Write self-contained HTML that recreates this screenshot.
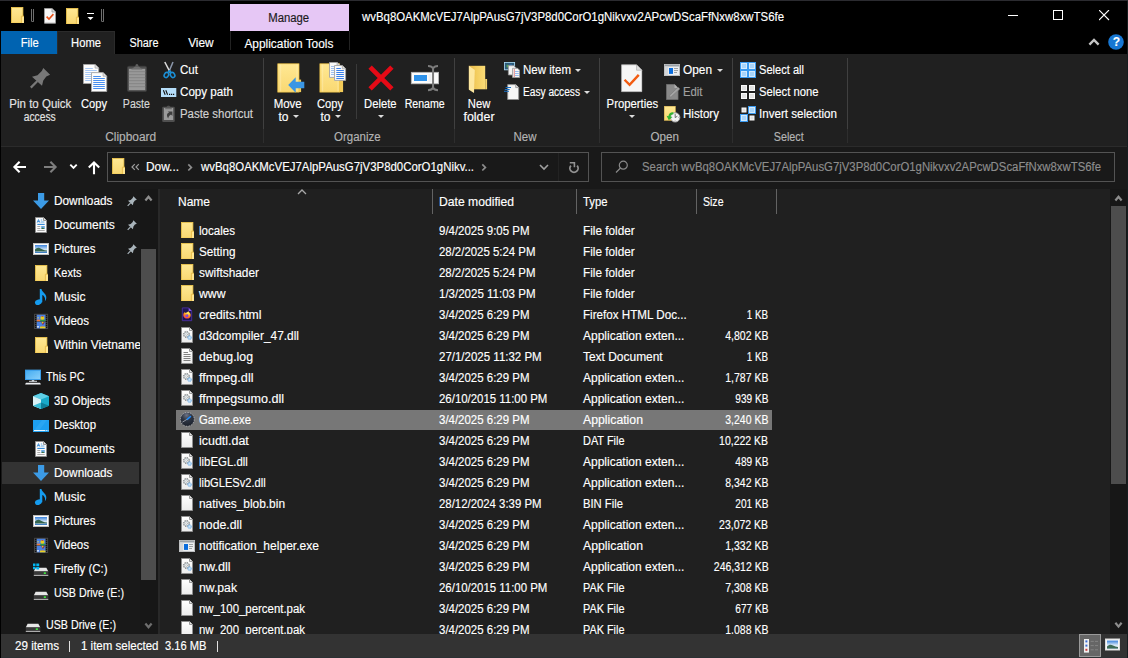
<!DOCTYPE html><html lang="en"><head><meta charset="utf-8"><title>File Explorer</title><style>
*{margin:0;padding:0;box-sizing:border-box}
html,body{width:1128px;height:658px;overflow:hidden;background:#000}
body{position:relative;font-family:"Liberation Sans",sans-serif;font-size:12px;color:#fff}
.b{position:absolute;display:block}
.t{position:absolute;white-space:pre;line-height:16px;height:16px;-webkit-text-stroke:0.15px}
#win{position:absolute;left:0;top:0;width:1128px;height:658px;overflow:hidden;background:#000}
</style></head><body><div id="win">
<svg width="0" height="0" style="position:absolute"><defs>
<linearGradient id="gF" x1="0" y1="0" x2="0" y2="1"><stop offset="0" stop-color="#ffe893"/><stop offset="1" stop-color="#f9d872"/></linearGradient>
<linearGradient id="gMon" x1="0" y1="0" x2="1" y2="1"><stop offset="0" stop-color="#3fa9f0"/><stop offset="1" stop-color="#8ed2fb"/></linearGradient>
<linearGradient id="gSky" x1="0" y1="0" x2="0" y2="1"><stop offset="0" stop-color="#3a82dc"/><stop offset="0.550" stop-color="#cfe4f7"/><stop offset="0.800" stop-color="#eef5fb"/><stop offset="1" stop-color="#4a86c4"/></linearGradient>
<linearGradient id="gPage" x1="0" y1="0" x2="0" y2="1"><stop offset="0" stop-color="#ffffff"/><stop offset="1" stop-color="#ececec"/></linearGradient>

<!-- small folder 13x16 -->
<symbol id="i-folder-s" viewBox="0 0 13 16"><rect x="0.400" y="0.400" width="11.500" height="15.600" fill="url(#gF)" stroke="#f3c94c" stroke-width="0.800"/><path d="M10.400 9.200h2.600v6.800h-2.600z" fill="#ffe591"/><path d="M10.400 16V9.200h2.600" fill="none" stroke="#e4b540" stroke-width="0.800"/></symbol>

<!-- small properties page 13x16 -->
<symbol id="i-props-s" viewBox="0 0 12 16"><path d="M0.500 0.500h7.500l3.500 3.500v11.200h-11z" fill="#f6f6f6" stroke="#9a9a9a"/><path d="M8 0.500v3.500h3.500" fill="#dcdcdc" stroke="#9a9a9a" stroke-width="0.800"/><path d="M2.600 8.600l2.400 2.500 4.400-5" fill="none" stroke="#e8521a" stroke-width="1.600"/></symbol>

<!-- generic file 13x16 -->
<symbol id="i-file" viewBox="0 0 12 16"><path d="M0.500 0.500h8l3 3v12h-11z" fill="url(#gPage)" stroke="#909090"/><path d="M8.500 0.500v3h3" fill="#e6e6e6" stroke="#909090" stroke-width="0.900"/></symbol>

<!-- text file -->
<symbol id="i-txt" viewBox="0 0 12 16"><path d="M0.500 0.500h8l3 3v12h-11z" fill="url(#gPage)" stroke="#909090"/><path d="M8.500 0.500v3h3" fill="#e6e6e6" stroke="#909090" stroke-width="0.900"/><path d="M2.500 4.500h4.500M2.500 6.500h7M2.500 8.500h7M2.500 10.500h7M2.500 12.500h7" stroke="#808080" stroke-width="1"/></symbol>

<!-- dll -->
<symbol id="i-dll" viewBox="0 0 12 16"><path d="M0.500 0.500h8l3 3v12h-11z" fill="url(#gPage)" stroke="#909090"/><path d="M8.500 0.500v3h3" fill="#e6e6e6" stroke="#909090" stroke-width="0.900"/><circle cx="5.400" cy="7.500" r="3.100" fill="none" stroke="#767676" stroke-width="1" stroke-dasharray="1.220 1.215"/><circle cx="5.400" cy="7.500" r="2.300" fill="#f2f6f8" stroke="#9aa4aa" stroke-width="0.800"/><circle cx="5.400" cy="7.500" r="0.900" fill="none" stroke="#808080" stroke-width="0.800" stroke-dasharray="0.700 0.710"/><circle cx="8.600" cy="10.600" r="1.900" fill="none" stroke="#58a6ec" stroke-width="0.900" stroke-dasharray="0.900 0.590"/><circle cx="8.600" cy="10.600" r="1.200" fill="#cfe6fa" stroke="#7ab8ee" stroke-width="0.600"/></symbol>

<!-- firefox html -->
<symbol id="i-ffhtml" viewBox="0 0 12 16"><radialGradient id="gFx" cx="0.62" cy="0.22" r="0.85"><stop offset="0" stop-color="#fff36b"/><stop offset="0.35" stop-color="#ffbd2e"/><stop offset="0.65" stop-color="#ff7a1a"/><stop offset="1" stop-color="#f0246e"/></radialGradient><path d="M1.300 1.900h6.400l3 3v9.800h-9.400z" fill="#1e1552" stroke="#4b30a0" stroke-width="0.900"/><path d="M7.700 1.900v3h3z" fill="#8c58f2"/><path d="M6 6.600c0.500-0.900 1.200-1.300 1.600-1.400 0.200 0.800 0.900 1.200 1.500 2 0.900 1.200 0.900 3-0.200 4.200-1.400 1.500-3.800 1.600-5.400 0.300-1.400-1.200-1.700-3.300-0.700-4.800 0.200-0.500 0.500-0.800 0.900-1 0 0.500 0.200 0.900 0.600 1.100 0.500-0.400 1.100-0.500 1.700-0.400z" fill="url(#gFx)"/><circle cx="5.900" cy="9.500" r="1.500" fill="#7a3df0"/><path d="M4.400 8.800c0.600-0.700 1.600-0.800 2.400-0.300-0.900 0-1.300 0.500-1.200 1.100-0.500 0-0.900-0.300-1.200-0.800z" fill="#ff9a2a"/></symbol>

<!-- exe window 16x12 -->
<symbol id="i-exe" viewBox="0 0 16 12"><rect x="0.400" y="0.400" width="15.200" height="11.200" fill="#eceef0" stroke="#c4c6c8" stroke-width="0.800"/><rect x="0.800" y="0.800" width="14.400" height="1.700" fill="#9aa0a6"/><rect x="0.800" y="2.500" width="3.400" height="8.700" fill="#d4d6d8"/><rect x="5" y="4" width="4" height="5.900" fill="#0a6cdc"/><path d="M10 4.500h4M10 6.500h4M10 8.500h3" stroke="#8a8e92" stroke-width="0.800"/></symbol>

<!-- game -->
<symbol id="i-game" viewBox="0 0 15 15"><radialGradient id="gG" cx="0.450" cy="0.200" r="0.800"><stop offset="0" stop-color="#6c7386"/><stop offset="0.450" stop-color="#2f3644"/><stop offset="1" stop-color="#1c212c"/></radialGradient><circle cx="7.300" cy="7.300" r="6.900" fill="url(#gG)" stroke="#d6d8de" stroke-width="0.600" stroke-dasharray="1.400 1.300"/><path d="M2.400 10.200l4.800-3" stroke="#a9adb8" stroke-width="0.800"/><path d="M6.900 7.600l4-3.400" stroke="#1c8cff" stroke-width="1.500"/></symbol>

<!-- downloads arrow -->
<symbol id="i-dl" viewBox="0 0 16 16"><path d="M5 0h6.2v7.6H16L8 16 0 7.6h5z" fill="#3c9be6"/></symbol>

<!-- documents -->
<symbol id="i-doc" viewBox="0 0 16 16"><path d="M2.5 0.5h8l3 3v12h-11z" fill="#fbfbfb" stroke="#8e8e8e"/><path d="M10.5 0.5v3h3" fill="#e0e0e0" stroke="#8e8e8e" stroke-width="0.9"/><path d="M4.2 5.6l1.3-3 1.3 3M4.7 4.6h1.6" fill="none" stroke="#2e86d6" stroke-width="0.9"/><path d="M7.8 3h1.4M7.8 5h3.6" stroke="#4f9fe0" stroke-width="0.9"/><path d="M4.3 7.4h7.4" stroke="#2e86d6" stroke-width="1.1"/><path d="M4.3 9.5h3M4.3 11.5h3M4.3 13.5h7.4" stroke="#a0a0a0" stroke-width="0.9"/><rect x="8.2" y="9" width="3.6" height="3" fill="#6aa8de"/><path d="M8.2 12l1.4-1.6 2.2 1.6z" fill="#3c6e3c"/></symbol>

<!-- pictures -->
<symbol id="i-pic" viewBox="0 0 16 16"><rect x="0.500" y="2.500" width="15" height="11" fill="#fdfdfd" stroke="#bdbdbd"/><rect x="2" y="4" width="12" height="8" fill="url(#gSky)"/><path d="M2 8.600c1.400-1.800 3-2.400 4.600-1.600 1.800 0.900 4 2.200 7.400 2.600v1H2z" fill="#35654e"/><path d="M2 10.600c4 0.500 8 0.300 12-0.200V12H2z" fill="#3f7fc2"/></symbol>

<!-- music -->
<symbol id="i-music" viewBox="0 0 16 16"><ellipse cx="5.400" cy="13.200" rx="3.500" ry="2.700" transform="rotate(-18 5.400 13.200)" fill="#159cf0"/><path d="M6.800 0h1.600c0.500 2 2.400 3.400 3.800 5.200 1.700 2.300 1.400 5-0.400 7.300 0.600-2.300 0.200-4.300-1.200-5.700-0.400-0.400-0.800-0.700-1.300-0.900v7.300H6.800z" fill="#159cf0"/></symbol>

<!-- videos -->
<symbol id="i-video" viewBox="0 0 16 16"><rect x="1.100" y="0.800" width="14" height="15.200" fill="#484848"/><rect x="2" y="1.8" width="1.500" height="1.100" fill="#0c0c0c"/><rect x="12.700" y="1.8" width="1.500" height="1.100" fill="#0c0c0c"/><rect x="2" y="3.8" width="1.500" height="1.100" fill="#0c0c0c"/><rect x="12.700" y="3.8" width="1.500" height="1.100" fill="#0c0c0c"/><rect x="2" y="5.8" width="1.500" height="1.100" fill="#0c0c0c"/><rect x="12.700" y="5.8" width="1.500" height="1.100" fill="#0c0c0c"/><rect x="2" y="7.8" width="1.500" height="1.100" fill="#0c0c0c"/><rect x="12.700" y="7.8" width="1.500" height="1.100" fill="#0c0c0c"/><rect x="2" y="9.8" width="1.500" height="1.100" fill="#0c0c0c"/><rect x="12.700" y="9.8" width="1.500" height="1.100" fill="#0c0c0c"/><rect x="2" y="11.8" width="1.500" height="1.100" fill="#0c0c0c"/><rect x="12.700" y="11.8" width="1.500" height="1.100" fill="#0c0c0c"/><rect x="2" y="13.8" width="1.500" height="1.100" fill="#0c0c0c"/><rect x="12.700" y="13.8" width="1.500" height="1.100" fill="#0c0c0c"/><rect x="3.800" y="1.800" width="8.600" height="6.400" fill="#4a82e2"/><rect x="3.800" y="9" width="8.600" height="6.300" fill="#4a82e2"/><circle cx="9.400" cy="4.900" r="2" fill="#e8cc1a"/><path d="M8.600 3.200h1.600v0.800H8.600z" fill="#b0305a"/><rect x="3.800" y="6.600" width="3.400" height="1.600" fill="#f07838"/><rect x="7.200" y="6.800" width="5.200" height="1.400" fill="#2c9a48"/><rect x="4.200" y="4.400" width="1.800" height="0.900" fill="#d8d060"/><path d="M8.200 9h3.600l-1 2.200-1.400 0.600z" fill="#7a2a5a"/><circle cx="9.600" cy="9.600" r="0.900" fill="#e8c81e"/><rect x="7" y="13.600" width="5.400" height="1.700" fill="#e8d020"/><rect x="4" y="13" width="2" height="1.600" fill="#c8d8f0"/><path d="M8 13.600c0.600-1 2.400-1 3 0z" fill="#e88a28"/></symbol>

<!-- this pc -->
<symbol id="i-pc" viewBox="0 0 16 16"><rect x="0" y="0.800" width="16" height="10.200" fill="url(#gMon)"/><rect x="0.500" y="1.300" width="15" height="9.200" fill="none" stroke="#3a9eea" stroke-width="1"/><path d="M6.800 11h2.400v1.400H6.800z" fill="#c8ccd0"/><path d="M4 12.300h8" stroke="#e8ecf0" stroke-width="0.900"/><path d="M0.200 15.600c0.100-1.200 0.700-1.800 1.600-1.800h12.400c0.900 0 1.500 0.600 1.600 1.800z" fill="#edf0f3"/></symbol>

<!-- 3d objects -->
<symbol id="i-3d" viewBox="0 0 16 16"><path d="M8 0l8 3.2v9.6L8 16 0 12.800V3.2z" fill="#19a9c9"/><path d="M8 0l8 3.2-8 3.2-8-3.200z" fill="#5fcfe6"/><path d="M0 3.2l8 3.200V16l-8-3.200z" fill="#d9f1f6"/><path d="M0 12.800l8-3.2V16z" fill="#36bcd6"/><path d="M8 9.600l8 3.200L8 16z" fill="#0f7f9a"/><path d="M0 3.200l8 6.400" stroke="#bfe6ee" stroke-width="0.4"/></symbol>

<!-- desktop -->
<symbol id="i-desktop" viewBox="0 0 16 16"><rect x="0" y="3" width="16" height="12" fill="#1d9ff0"/><path d="M0 15L9 3h5L5 15z" fill="#35abf4" opacity="0.55"/><path d="M1 13.500h11.400M13.200 13.500h0.800M14.600 13.500h0.800" stroke="#fff" stroke-width="0.9"/></symbol>

<!-- drive -->
<symbol id="i-drive" viewBox="0 0 16 16"><path d="M2.600 6.800h10.800l1.900 3.600H0.800z" fill="#e6e6e6"/><rect x="0.800" y="10.400" width="14.500" height="3.600" fill="#383838"/><path d="M0.800 14.400h14.500" stroke="#d0d0d0" stroke-width="0.900"/><rect x="10.800" y="11.300" width="2.100" height="1.700" fill="#3ee43e"/></symbol>
<symbol id="i-drivec" viewBox="0 0 16 16"><path d="M2.600 6.800h10.800l1.900 3.600H0.800z" fill="#e6e6e6"/><rect x="0.800" y="10.400" width="14.500" height="3.600" fill="#383838"/><path d="M0.800 14.400h14.500" stroke="#d0d0d0" stroke-width="0.900"/><rect x="10.800" y="11.300" width="2.100" height="1.700" fill="#3ee43e"/><path d="M0 2.600h2.500v2.500H0zM3.300 2.400h2.900v2.700H3.300zM0 5.800h2.500v2.400H0zM3.300 5.800h2.900v2.600H3.300z" fill="#00b6f0"/></symbol>

<!-- pinned indicator 11x12 -->
<symbol id="i-pinned" viewBox="0 0 11 12"><path d="M6.700 0.300L10.500 4.100 8.400 5 6.800 7.200 6.200 10 0.900 5.200 3.800 4.400 6 2.200z" fill="#a9b4bb"/><path d="M3.700 7.500L0.500 10.800" stroke="#a9b4bb" stroke-width="1.300"/></symbol>

<!-- ribbon: pin -->
<symbol id="i-pin" viewBox="0 0 21 22"><path d="M13.300 0.900L20.100 7.700 16.300 9.400 13.300 13.400 12 18.700 2 9.800 7.500 8.300 11.800 4z" fill="#787878"/><path d="M7.400 14L0.800 20.600" stroke="#787878" stroke-width="2.200"/></symbol>

<!-- ribbon: copy 26x30 -->
<symbol id="i-copy" viewBox="0 0 26 30"><path d="M1.500 1.500h11.600l3.600 3.600v15.400H1.500z" fill="#fcfcfc" stroke="#a6a6a6" stroke-width="0.900"/><path d="M13.100 1.500v3.600h3.600" fill="#e4e4e4" stroke="#a6a6a6" stroke-width="0.800"/><path d="M3.200 5.5h7.6M3.200 7.5h11.6M3.200 9.5h11.6M3.200 11.5h11.6M3.200 13.5h11.6M3.200 15.5h11.6M3.200 17.5h11.6" stroke="#a9c9f5" stroke-width="1.100"/><path d="M9.500 9.600h11.600l3.600 3.600v15.300H9.500z" fill="#fcfcfc" stroke="#a6a6a6" stroke-width="0.900"/><path d="M21.100 9.600v3.600h3.600" fill="#e4e4e4" stroke="#a6a6a6" stroke-width="0.800"/><path d="M11.200 13.5h7.6M11.200 15.5h11.6M11.200 17.5h11.6M11.200 19.5h11.6M11.200 21.5h11.6M11.200 23.5h11.6M11.200 25.5h11.6" stroke="#4a90f0" stroke-width="1.200"/></symbol>

<!-- ribbon: paste 22x30 -->
<symbol id="i-paste" viewBox="0 0 20 29"><rect x="0.300" y="3.200" width="19.400" height="25.400" rx="1.600" fill="#4f4f4f" stroke="#3c3c3c" stroke-width="0.600"/><rect x="1.900" y="5.800" width="16.300" height="21.300" fill="#999999"/><path d="M1.900 8.7h16.300M1.900 11.7h16.300M1.900 14.7h16.300M1.900 17.7h16.300M1.900 20.7h16.300M1.900 23.7h16.300" stroke="#848484" stroke-width="1"/><path d="M4.100 6.600L8 3.400h3.800l3.800 3.200z" fill="#6e6e6e"/><path d="M8.400 3.400c0-1.600 0.600-2.400 1.500-2.400s1.500 0.800 1.500 2.400z" fill="#5e5e5e"/></symbol>

<!-- ribbon: cut 16x18 -->
<symbol id="i-cut" viewBox="0 0 16 18"><path d="M11 1L6.800 11" stroke="#8c98ac" stroke-width="1.500" fill="none"/><path d="M2.800 1L8.200 11.400" stroke="#dcdcdc" stroke-width="1.500" fill="none"/><ellipse cx="4.400" cy="14" rx="2.100" ry="2.700" transform="rotate(28 4.400 14)" fill="none" stroke="#1b8fd6" stroke-width="1.600"/><ellipse cx="10.600" cy="14" rx="2.100" ry="2.700" transform="rotate(-28 10.600 14)" fill="none" stroke="#1b8fd6" stroke-width="1.600"/><path d="M7.500 9.600L5.600 11.800M7.500 9.600l1.900 2.200" stroke="#1b8fd6" stroke-width="1.600"/></symbol>

<!-- ribbon: copy path 16x12 -->
<symbol id="i-copypath" viewBox="0 0 16 12"><rect x="0" y="2" width="15.300" height="9" fill="#b6defa"/><path d="M2.400 4.200l1.800 4.600M4.800 4.200l1.800 4.600" stroke="#111" stroke-width="1.100"/><path d="M8 8.300h1.200M10 8.300h1.200M12 8.300h1.200" stroke="#111" stroke-width="1.200"/></symbol>

<!-- ribbon: paste shortcut 14x18 -->
<symbol id="i-pasteshortcut" viewBox="0 0 14 18"><rect x="0.200" y="1.700" width="12.600" height="15.300" rx="1.300" fill="#4f4f4f"/><path d="M4.600 1.700c0.300-0.700 1-1 1.900-1s1.600 0.300 1.900 1z" fill="#5c5c5c"/><rect x="1.900" y="2.900" width="9.300" height="12.100" fill="#9a9a9a"/><path d="M3.200 3.700h6.600" stroke="#5e5e5e" stroke-width="0.900"/><path d="M5.800 6.400h4.600v4.600l-1.400-1.400c-1.500 0.900-2.400 2.100-2.800 3.800-1.100-1.500-1.500-3-1-4.300 0.400-0.900 1.100-1.400 2-1.600z" fill="#3e3e3e"/></symbol>

<!-- ribbon: move to 28x30 -->
<symbol id="i-moveto" viewBox="0 0 28 30"><path d="M22 16.600h2.100v12.500H22z" fill="#f3cb58"/><rect x="0.800" y="0.800" width="21.200" height="28.300" fill="url(#gF)" stroke="#f0c445" stroke-width="0.700"/><path d="M3.700 1.500v27M20 1.500v27" stroke="#fff3c4" stroke-width="0.600" opacity="0.800"/><path d="M18.700 14.200v4.600h8.600v6.400h-8.600v4.600L11.200 22z" fill="#3a96e4"/></symbol>

<!-- ribbon: copy to 28x31 -->
<symbol id="i-copyto" viewBox="0 0 28 31"><path d="M20 18.300h4.100v11.800H20z" fill="#f3cb58"/><rect x="0.900" y="1.800" width="19.800" height="28.300" fill="url(#gF)" stroke="#f0c445" stroke-width="0.700"/><path d="M3.700 2.500v27M19 2.500v27" stroke="#fff3c4" stroke-width="0.600" opacity="0.800"/><path d="M10.500 0.400h7.600l3 3v12h-10.600z" fill="#fafafa" stroke="#a4a4a4" stroke-width="0.900"/><path d="M18.100 0.400v3h3" fill="#e0e0e0" stroke="#a4a4a4" stroke-width="0.800"/><path d="M12 4.500h3M12 6.500h3M12 8.500h3M12 10.500h3M12 12.500h3" stroke="#9ec0ee" stroke-width="1"/><path d="M15.500 3.500h7.800l3.300 3.300v11.600H15.500z" fill="#fafafa" stroke="#a4a4a4" stroke-width="0.900"/><path d="M23.300 3.500v3.300h3.300" fill="#e0e0e0" stroke="#a4a4a4" stroke-width="0.800"/><path d="M17.300 6.500h4.500M17.300 8.500h7.600M17.300 10.500h7.600M17.300 12.500h7.600M17.300 14.500h7.600M17.300 16.500h7.600" stroke="#3a80ea" stroke-width="1"/></symbol>

<!-- ribbon: delete 26x26 -->
<symbol id="i-delete" viewBox="0 0 26 26"><path d="M2.100 2.100L23.900 23.900M23.900 2.100L2.100 23.900" stroke="#e60a16" stroke-width="4.700"/></symbol>

<!-- ribbon: rename 29x28 -->
<symbol id="i-rename" viewBox="0 0 29 28"><rect x="1.300" y="8.300" width="27.400" height="11.500" fill="#fbfbfb" stroke="#b4b4b4" stroke-width="0.800"/><rect x="4" y="11" width="13" height="6" fill="#2e92ea"/><rect x="18.500" y="10" width="3" height="8" fill="#eef0f2"/><path d="M18 2c2.600 0 4.200 0.600 5.050 2.400C23.900 2.600 25.500 2 28 2M18 26.200c2.600 0 4.200-0.600 5.050-2.400 0.850 1.800 2.450 2.400 4.950 2.400" fill="none" stroke="#7c7c7c" stroke-width="2"/><path d="M23.050 3.500v21.400" stroke="#7c7c7c" stroke-width="2"/></symbol>

<!-- ribbon: new folder 20x29 -->
<symbol id="i-newfolder" viewBox="0 0 20 29"><linearGradient id="gNF" x1="0" y1="0" x2="1" y2="0"><stop offset="0" stop-color="#e3b245"/><stop offset="0.45" stop-color="#f3cc5e"/><stop offset="1" stop-color="#fbdc76"/></linearGradient><path d="M17.200 14h1.900v10.300h-1.900z" fill="#f6d36c"/><rect x="0.900" y="0.800" width="16.300" height="23.500" fill="url(#gNF)"/><path d="M0.900 0.800L6.800 5 6 28 0.900 24.800z" fill="#fde7a0"/></symbol>

<!-- ribbon: new item 16x16 -->
<symbol id="i-newitem" viewBox="0 0 16 16"><rect x="0.400" y="0.400" width="10.200" height="7.400" fill="#2c5a78" stroke="#a6d6f0" stroke-width="0.900"/><rect x="2.600" y="2.800" width="2" height="2.600" fill="#58a058"/><rect x="5.400" y="2.600" width="2.600" height="2" fill="#3f7fd0"/><path d="M4.400 3.700h5.400l2 2v7.200H4.400z" fill="#f4f4f4" stroke="#9a9a9a" stroke-width="0.900"/><path d="M8.600 6.300h5l2 2v7.200h-7z" fill="#f8f8f8" stroke="#9a9a9a" stroke-width="0.900"/><path d="M10.300 7v8" stroke="#e06a6a" stroke-width="0.800"/><path d="M11 9.500h3.800M11 11.500h3.800M11 13.500h3.800" stroke="#8ab4f0" stroke-width="0.900"/></symbol>

<!-- ribbon: easy access 16x16 -->
<symbol id="i-easyaccess" viewBox="0 0 16 16"><path d="M3.700 0.600h8l3 3v12h-11z" fill="#f6f6f6" stroke="#8e8e8e" stroke-width="0.900"/><path d="M11.700 0.600v3h3" fill="#dedede" stroke="#8e8e8e" stroke-width="0.800"/><path d="M1.600 3.500h5.400M0.800 5.500h4.900M0 7.300h5" stroke="#1a6fc0" stroke-width="1"/></symbol>

<!-- ribbon: properties 23x30 -->
<symbol id="i-props" viewBox="0 0 23 30"><path d="M0.600 0.600h16l5.800 5.800v23H0.600z" fill="#f6f6f6" stroke="#b4b4b4" stroke-width="0.800"/><path d="M16.600 0.600v5.800h5.800" fill="#dedede" stroke="#b4b4b4" stroke-width="0.800"/><path d="M3.800 16.600l5.400 5.400L19 11.400" fill="none" stroke="#f25c12" stroke-width="2.600"/></symbol>

<!-- ribbon: open 16x12 -->
<symbol id="i-open" viewBox="0 0 16 12"><rect x="0.400" y="0.400" width="15.200" height="11.200" fill="#eceef0" stroke="#c4c6c8" stroke-width="0.800"/><rect x="0.800" y="0.800" width="14.400" height="1.700" fill="#9aa0a6"/><rect x="0.800" y="2.500" width="3.400" height="8.700" fill="#d4d6d8"/><rect x="5" y="4" width="4" height="5.900" fill="#0a6cdc"/><path d="M10 4.500h4M10 6.500h4M10 8.500h3" stroke="#8a8e92" stroke-width="0.800"/></symbol>

<!-- ribbon: edit 13x16 (disabled grey) -->
<symbol id="i-edit" viewBox="0 0 14 16"><path d="M0.300 0.300h8.200l3.600 3.600v11.800H0.300z" fill="#8a8a8a" stroke="#6a6a6a" stroke-width="0.600"/><path d="M8.500 0.300v3.600h3.600z" fill="#b0b0b0"/><path d="M3.200 13.200l0.500-2 8.400-8 1.700 1.700-8.500 7.900z" fill="#a4a4a4" stroke="#747474" stroke-width="0.500"/></symbol>

<!-- ribbon: history 17x17 -->
<symbol id="i-history" viewBox="0 0 17 17"><rect x="0.200" y="0.200" width="11.200" height="14.200" fill="url(#gF)" stroke="#e6bd52" stroke-width="0.500"/><circle cx="11.200" cy="11.400" r="4.700" fill="#f4f4f4" stroke="#9a9a9a" stroke-width="0.900"/><path d="M11.200 8.200v3.400l2.200-1.400" fill="none" stroke="#5a5a5a" stroke-width="0.900"/><path d="M11.200 7.600v0.800M11.200 14.400v0.800M7.400 11.400h0.800M14.200 11.400h0.800" stroke="#8a8a8a" stroke-width="0.700"/><path d="M9.400 6.400c-2.600-0.400-4.600 1.200-5 3.800l-1.800-0.400 2.200 4.400 3.400-3.200-1.800-0.400c0.400-1.600 1.400-2.400 3-2.400z" fill="#32b432"/></symbol>

<!-- ribbon: select all/none/invert 16x16 -->
<symbol id="i-selall" viewBox="0 0 16 16"><rect width="16" height="16" fill="#3a9af0"/><rect x="1" y="1" width="6" height="6" fill="#d4eafc"/><rect x="2" y="2" width="4" height="4" fill="#a8d4fa"/><rect x="9" y="1" width="6" height="6" fill="#d4eafc"/><rect x="10" y="2" width="4" height="4" fill="#a8d4fa"/><rect x="1" y="9" width="6" height="6" fill="#d4eafc"/><rect x="2" y="10" width="4" height="4" fill="#a8d4fa"/><rect x="9" y="9" width="6" height="6" fill="#d4eafc"/><rect x="10" y="10" width="4" height="4" fill="#a8d4fa"/></symbol>
<symbol id="i-selnone" viewBox="0 0 16 16"><rect x="1" y="1" width="6" height="6" fill="#fafafa"/><rect x="2" y="2" width="4" height="4" fill="#e2e2e2"/><rect x="9" y="1" width="6" height="6" fill="#fafafa"/><rect x="10" y="2" width="4" height="4" fill="#e2e2e2"/><rect x="1" y="9" width="6" height="6" fill="#fafafa"/><rect x="2" y="10" width="4" height="4" fill="#e2e2e2"/><rect x="9" y="9" width="6" height="6" fill="#fafafa"/><rect x="10" y="10" width="4" height="4" fill="#e2e2e2"/></symbol>
<symbol id="i-selinv" viewBox="0 0 16 16"><rect x="8" y="0" width="8" height="8" fill="#3a9af0"/><rect x="0" y="8" width="8" height="8" fill="#3a9af0"/><rect x="1.5" y="1.5" width="5" height="5" fill="#fafafa"/><rect x="2.5" y="2.5" width="3" height="3" fill="#e2e2e2"/><rect x="9" y="1" width="6" height="6" fill="#d4eafc"/><rect x="10" y="2" width="4" height="4" fill="#a8d4fa"/><rect x="1" y="9" width="6" height="6" fill="#d4eafc"/><rect x="2" y="10" width="4" height="4" fill="#a8d4fa"/><rect x="9.5" y="9.5" width="5" height="5" fill="#fafafa"/><rect x="10.5" y="10.5" width="3" height="3" fill="#e2e2e2"/></symbol>

<!-- status bar view buttons -->
<symbol id="i-viewdetails" viewBox="0 0 16 16"><rect x="1" y="1" width="5" height="13.600" fill="#f0f0f0"/><rect x="2.400" y="2.400" width="2" height="2" fill="#3a6ad0"/><rect x="2.400" y="6.600" width="2" height="2" fill="#3a6ad0"/><rect x="2.400" y="10.800" width="2" height="2" fill="#d03a3a"/><path d="M7.600 3.400h3.200M12 3.400h3M7.600 7.600h3.200M12 7.600h3M7.600 11.800h3.200M12 11.800h3" stroke="#8a8a8a" stroke-width="0.800"/></symbol>
<symbol id="i-viewlarge" viewBox="0 0 15 14"><rect x="0.500" y="1" width="14" height="11" fill="#f7f7f7" stroke="#dcdcdc"/><rect x="2" y="2.600" width="11" height="7.800" fill="url(#gSky)"/><path d="M2 8.600c2-2 4-2.200 6-1 1.600 0.900 3.400 1.400 5 1.400v1.400H2z" fill="#3d6b55"/></symbol>
</defs></svg>

<div class="b" style="left:0px;top:0px;width:1128px;height:1px;background:#2b2b30;"></div>
<div class="b" style="left:0px;top:54px;width:1128px;height:92px;background:#202020;"></div>
<div class="b" style="left:0px;top:146px;width:1128px;height:1px;background:#2b2b2b;"></div>
<div class="b" style="left:0px;top:147px;width:1128px;height:42px;background:#191919;"></div>
<div class="b" style="left:0px;top:189px;width:160px;height:445px;background:#191919;"></div>
<div class="b" style="left:160px;top:189px;width:950px;height:445px;background:#202020;"></div>
<div class="b" style="left:1110px;top:189px;width:17px;height:445px;background:#171717;"></div>
<div class="b" style="left:0px;top:634px;width:1128px;height:24px;background:#333333;"></div>
<div class="b" style="left:0px;top:657px;width:1128px;height:1px;background:#2c3134;"></div>
<div class="b" style="left:0px;top:1px;width:1px;height:657px;background:#000;"></div>
<div class="b" style="left:1127px;top:1px;width:1px;height:657px;background:#161d20;"></div>
<svg class="b" style="left:11px;top:7px;" width="13" height="16"><use href="#i-folder-s"/></svg>
<div class="b" style="left:31px;top:9px;width:3px;height:13px;background:#000;border:1px solid #6e6e6e;border-top:0;border-radius:0 0 1.5px 1.5px"></div>
<svg class="b" style="left:44px;top:8px;" width="12" height="16"><use href="#i-props-s"/></svg>
<svg class="b" style="left:66px;top:8px;" width="13" height="16"><use href="#i-folder-s"/></svg>
<svg class="b" style="left:86px;top:12px;" width="10" height="10" viewBox="0 0 10 10"><path d="M1 1.500h7" stroke="#fff" stroke-width="1"/><path d="M1.500 5h6L4.500 8z" fill="#fff"/></svg>
<div class="b" style="left:101px;top:9px;width:3px;height:13px;background:#000;border:1px solid #6e6e6e;border-top:0;border-radius:0 0 1.5px 1.5px"></div>
<div class="b" style="left:230px;top:4px;width:119px;height:27px;background:#e6c7f5;"></div>
<span class="t" style="left:267.31px;top:10.00px;font-size:12px;color:#1a1a1a;transform:scaleX(0.9452);transform-origin:center center;">Manage</span>
<span class="t" style="left:362.00px;top:8.50px;font-size:12px;color:#fff;transform:scaleX(0.9506);transform-origin:left center;">wvBq8OAKMcVEJ7AlpPAusG7jV3P8d0CorO1gNikvxv2APcwDScaFfNxw8xwTS6fe</span>
<svg class="b" style="left:1008px;top:10px;" width="11" height="11" viewBox="0 0 11 11"><path d="M0 5.5h10" stroke="#fff" stroke-width="1"/></svg>
<svg class="b" style="left:1053px;top:10px;" width="11" height="11" viewBox="0 0 11 11"><rect x="0.5" y="0.5" width="9" height="9" fill="none" stroke="#fff" stroke-width="1"/></svg>
<svg class="b" style="left:1099px;top:10px;" width="11" height="11" viewBox="0 0 11 11"><path d="M0 0l10 10M10 0L0 10" stroke="#fff" stroke-width="1.1"/></svg>
<div class="b" style="left:1px;top:31px;width:56px;height:23px;background:#0063b1;"></div>
<span class="t" style="left:19.53px;top:35.30px;font-size:12px;color:#fff;transform:scaleX(0.9305);transform-origin:center center;">File</span>
<div class="b" style="left:57px;top:31px;width:58px;height:23px;background:#202020;border:1px solid #2b2b2b;border-bottom:0"></div>
<span class="t" style="left:69.99px;top:35.30px;font-size:12px;color:#fff;transform:scaleX(0.9370);transform-origin:center center;">Home</span>
<span class="t" style="left:128.28px;top:35.30px;font-size:12px;color:#fff;transform:scaleX(0.9054);transform-origin:center center;">Share</span>
<span class="t" style="left:187.60px;top:35.30px;font-size:12px;color:#fff;transform:scaleX(0.9885);transform-origin:center center;">View</span>
<div class="b" style="left:230px;top:31px;width:1px;height:19px;background:#222;"></div>
<div class="b" style="left:349px;top:31px;width:1px;height:19px;background:#222;"></div>
<span class="t" style="left:243.58px;top:35.50px;font-size:12px;color:#fff;transform:scaleX(0.9906);transform-origin:center center;">Application Tools</span>
<svg class="b" style="left:1088px;top:38px;" width="12" height="8" viewBox="0 0 12 8"><path d="M1.400 6.600L6 2l4.600 4.600" fill="none" stroke="#c4c4c4" stroke-width="2.400"/></svg>
<svg class="b" style="left:1108px;top:34px;" width="16" height="16" viewBox="0 0 16 16"><circle cx="8" cy="8" r="7.8" fill="#1777d3"/></svg>
<span class="t" style="left:1112.66px;top:34.00px;font-size:12px;color:#fff;font-weight:bold">?</span>
<div class="b" style="left:263px;top:58px;width:1px;height:71px;background:#404040;"></div>
<div class="b" style="left:263px;top:129px;width:1px;height:14px;background:#2e2e2e;"></div>
<div class="b" style="left:454px;top:58px;width:1px;height:71px;background:#404040;"></div>
<div class="b" style="left:454px;top:129px;width:1px;height:14px;background:#2e2e2e;"></div>
<div class="b" style="left:599px;top:58px;width:1px;height:71px;background:#404040;"></div>
<div class="b" style="left:599px;top:129px;width:1px;height:14px;background:#2e2e2e;"></div>
<div class="b" style="left:732px;top:58px;width:1px;height:71px;background:#404040;"></div>
<div class="b" style="left:732px;top:129px;width:1px;height:14px;background:#2e2e2e;"></div>
<div class="b" style="left:847px;top:58px;width:1px;height:71px;background:#404040;"></div>
<div class="b" style="left:847px;top:129px;width:1px;height:14px;background:#2e2e2e;"></div>
<div class="b" style="left:356px;top:64px;width:1px;height:55px;background:#3a3a3a;"></div>
<span class="t" style="left:105.31px;top:129.20px;font-size:12px;color:#b4b4b4;transform:scaleX(0.9927);transform-origin:center center;">Clipboard</span>
<span class="t" style="left:333.15px;top:129.20px;font-size:12px;color:#b4b4b4;transform:scaleX(0.9548);transform-origin:center center;">Organize</span>
<span class="t" style="left:513.49px;top:129.20px;font-size:12px;color:#b4b4b4;transform:scaleX(0.9577);transform-origin:center center;">New</span>
<span class="t" style="left:650.32px;top:129.20px;font-size:12px;color:#b4b4b4;transform:scaleX(0.9707);transform-origin:center center;">Open</span>
<span class="t" style="left:772.32px;top:129.20px;font-size:12px;color:#b4b4b4;transform:scaleX(0.8993);transform-origin:center center;">Select</span>
<svg class="b" style="left:30px;top:67px;" width="21" height="22"><use href="#i-pin"/></svg>
<span class="t" style="left:7.65px;top:95.60px;font-size:12px;color:#e4e4e4;transform:scaleX(0.9582);transform-origin:center center;">Pin to Quick</span>
<span class="t" style="left:21.32px;top:108.60px;font-size:12px;color:#e4e4e4;transform:scaleX(0.8565);transform-origin:center center;">access</span>
<svg class="b" style="left:82px;top:63px;" width="26" height="30"><use href="#i-copy"/></svg>
<span class="t" style="left:79.99px;top:95.60px;font-size:12px;color:#fff;transform:scaleX(0.9281);transform-origin:center center;">Copy</span>
<svg class="b" style="left:127px;top:63px;" width="20" height="29"><use href="#i-paste"/></svg>
<span class="t" style="left:121.16px;top:95.60px;font-size:12px;color:#d8d8d8;transform:scaleX(0.8798);transform-origin:center center;">Paste</span>
<svg class="b" style="left:162px;top:61px;" width="16" height="18"><use href="#i-cut"/></svg>
<span class="t" style="left:180.00px;top:62.30px;font-size:12px;color:#fff;transform:scaleX(0.9632);transform-origin:left center;">Cut</span>
<svg class="b" style="left:161px;top:86px;" width="16" height="12"><use href="#i-copypath"/></svg>
<span class="t" style="left:180.00px;top:84.30px;font-size:12px;color:#fff;transform:scaleX(0.9689);transform-origin:left center;">Copy path</span>
<svg class="b" style="left:162px;top:105px;" width="14" height="18"><use href="#i-pasteshortcut"/></svg>
<span class="t" style="left:180.00px;top:106.30px;font-size:12px;color:#d2d2d2;transform:scaleX(0.9515);transform-origin:left center;">Paste shortcut</span>
<svg class="b" style="left:277px;top:63px;" width="28" height="30"><use href="#i-moveto"/></svg>
<span class="t" style="left:273.33px;top:95.60px;font-size:12px;color:#fff;transform:scaleX(0.9542);transform-origin:center center;">Move</span>
<span class="t" style="left:278.49px;top:108.60px;font-size:12px;color:#fff;">to</span>
<svg class="b" style="left:293px;top:115px;" width="6" height="4" viewBox="0 0 6 4"><path d="M0 0h6L3 3z" fill="#ddd"/></svg>
<svg class="b" style="left:319px;top:62px;" width="28" height="31"><use href="#i-copyto"/></svg>
<span class="t" style="left:315.99px;top:95.60px;font-size:12px;color:#fff;transform:scaleX(0.9281);transform-origin:center center;">Copy</span>
<span class="t" style="left:320.49px;top:108.60px;font-size:12px;color:#fff;">to</span>
<svg class="b" style="left:335px;top:115px;" width="6" height="4" viewBox="0 0 6 4"><path d="M0 0h6L3 3z" fill="#ddd"/></svg>
<svg class="b" style="left:368px;top:65px;" width="26" height="26"><use href="#i-delete"/></svg>
<span class="t" style="left:363.16px;top:95.60px;font-size:12px;color:#fff;transform:scaleX(0.9369);transform-origin:center center;">Delete</span>
<svg class="b" style="left:378px;top:115px;" width="6" height="4" viewBox="0 0 6 4"><path d="M0 0h6L3 3z" fill="#ddd"/></svg>
<svg class="b" style="left:410px;top:64px;" width="29" height="28"><use href="#i-rename"/></svg>
<span class="t" style="left:401.82px;top:95.60px;font-size:12px;color:#fff;transform:scaleX(0.8818);transform-origin:center center;">Rename</span>
<svg class="b" style="left:468px;top:65px;" width="20" height="29"><use href="#i-newfolder"/></svg>
<span class="t" style="left:467.49px;top:95.60px;font-size:12px;color:#fff;transform:scaleX(0.9369);transform-origin:center center;">New</span>
<span class="t" style="left:464.48px;top:108.60px;font-size:12px;color:#fff;transform:scaleX(1.0323);transform-origin:center center;">folder</span>
<svg class="b" style="left:504px;top:62px;" width="16" height="16"><use href="#i-newitem"/></svg>
<span class="t" style="left:523.00px;top:62.30px;font-size:12px;color:#fff;transform:scaleX(0.9597);transform-origin:left center;">New item</span>
<svg class="b" style="left:575px;top:69px;" width="6" height="4" viewBox="0 0 6 4"><path d="M0 0h6L3 3z" fill="#ddd"/></svg>
<svg class="b" style="left:504px;top:84px;" width="16" height="16"><use href="#i-easyaccess"/></svg>
<span class="t" style="left:523.00px;top:84.30px;font-size:12px;color:#fff;transform:scaleX(0.8462);transform-origin:left center;">Easy access</span>
<svg class="b" style="left:584px;top:91px;" width="6" height="4" viewBox="0 0 6 4"><path d="M0 0h6L3 3z" fill="#ddd"/></svg>
<svg class="b" style="left:621px;top:64px;" width="21.5" height="28.5"><use href="#i-props"/></svg>
<span class="t" style="left:604.65px;top:95.60px;font-size:12px;color:#fff;transform:scaleX(0.9414);transform-origin:center center;">Properties</span>
<svg class="b" style="left:629px;top:115px;" width="6" height="4" viewBox="0 0 6 4"><path d="M0 0h6L3 3z" fill="#ddd"/></svg>
<svg class="b" style="left:664px;top:64px;" width="16" height="12"><use href="#i-open"/></svg>
<span class="t" style="left:683.00px;top:62.30px;font-size:12px;color:#fff;transform:scaleX(0.9878);transform-origin:left center;">Open</span>
<svg class="b" style="left:717px;top:69px;" width="6" height="4" viewBox="0 0 6 4"><path d="M0 0h6L3 3z" fill="#ddd"/></svg>
<svg class="b" style="left:666px;top:84px;" width="14" height="16"><use href="#i-edit"/></svg>
<span class="t" style="left:683.00px;top:84.30px;font-size:12px;color:#a0a0a0;transform:scaleX(0.9426);transform-origin:left center;">Edit</span>
<svg class="b" style="left:664px;top:106px;" width="17" height="17"><use href="#i-history"/></svg>
<span class="t" style="left:683.00px;top:106.30px;font-size:12px;color:#fff;transform:scaleX(0.9640);transform-origin:left center;">History</span>
<svg class="b" style="left:740px;top:62px;" width="16" height="16"><use href="#i-selall"/></svg>
<span class="t" style="left:759.00px;top:62.30px;font-size:12px;color:#fff;transform:scaleX(0.9240);transform-origin:left center;">Select all</span>
<svg class="b" style="left:740px;top:84px;" width="16" height="16"><use href="#i-selnone"/></svg>
<span class="t" style="left:759.00px;top:84.30px;font-size:12px;color:#fff;transform:scaleX(0.9386);transform-origin:left center;">Select none</span>
<svg class="b" style="left:740px;top:106px;" width="16" height="16"><use href="#i-selinv"/></svg>
<span class="t" style="left:759.00px;top:106.30px;font-size:12px;color:#fff;transform:scaleX(0.9663);transform-origin:left center;">Invert selection</span>
<svg class="b" style="left:12px;top:159px;" width="16" height="16" viewBox="0 0 16 16"><path d="M14 8H3M7.600 2.800L2.400 8l5.200 5.200" fill="none" stroke="#fff" stroke-width="2.100"/></svg>
<svg class="b" style="left:42px;top:159px;" width="16" height="16" viewBox="0 0 16 16"><path d="M2 8h11M8.400 2.800L13.600 8l-5.200 5.200" fill="none" stroke="#7e7e7e" stroke-width="2.100"/></svg>
<svg class="b" style="left:69px;top:163px;" width="9" height="8" viewBox="0 0 9 8"><path d="M1.300 1.700L4.500 4.900 7.700 1.700" fill="none" stroke="#fff" stroke-width="1.900"/></svg>
<svg class="b" style="left:86px;top:160px;" width="16" height="16" viewBox="0 0 16 16"><path d="M8 14.300V3M2.800 7.600L8 2.400l5.200 5.200" fill="none" stroke="#fff" stroke-width="2.100"/></svg>
<div class="b" style="left:107px;top:152px;width:482px;height:30px;background:#191919;border:1px solid #535353"></div>
<div class="b" style="left:558px;top:153px;width:1px;height:28px;background:#232323;"></div>
<svg class="b" style="left:112px;top:158px;" width="13" height="16"><use href="#i-folder-s"/></svg>
<svg class="b" style="left:131px;top:163px;" width="9" height="8" viewBox="0 0 9 8"><path d="M3.800 1.200L1 4l2.800 2.800M7.800 1.200L5 4l2.800 2.800" fill="none" stroke="#9c9c9c" stroke-width="1.200"/></svg>
<span class="t" style="left:146.00px;top:159.00px;font-size:12px;color:#fff;transform:scaleX(0.9892);transform-origin:left center;">Dow...</span>
<svg class="b" style="left:187px;top:163px;" width="7" height="9" viewBox="0 0 7 9"><path d="M1.300 1.300L4.400 4.400 1.300 7.500" fill="none" stroke="#8c8c8c" stroke-width="1.700"/></svg>
<span class="t" style="left:201.00px;top:159.00px;font-size:12px;color:#fff;transform:scaleX(0.9512);transform-origin:left center;">wvBq8OAKMcVEJ7AlpPAusG7jV3P8d0CorO1gNikv...</span>
<svg class="b" style="left:481px;top:163px;" width="7" height="9" viewBox="0 0 7 9"><path d="M1.300 1.300L4.400 4.400 1.300 7.500" fill="none" stroke="#8c8c8c" stroke-width="1.700"/></svg>
<svg class="b" style="left:539px;top:164px;" width="10" height="7" viewBox="0 0 10 7"><path d="M1 1l4 4 4-4" fill="none" stroke="#a0a0a0" stroke-width="1.6"/></svg>
<svg class="b" style="left:568px;top:160px;" width="13" height="14" viewBox="0 0 13 14"><path d="M9.140 5.560A4.100 4.100 0 1 1 2.860 5.560" fill="none" stroke="#929292" stroke-width="1.800"/><path d="M1.800 2.700H7.200M6.400 2V7.300" fill="none" stroke="#929292" stroke-width="1.600"/></svg>
<div class="b" style="left:601px;top:152px;width:514px;height:30px;background:#191919;border:1px solid #535353"></div>
<svg class="b" style="left:615px;top:160px;" width="14" height="14" viewBox="0 0 14 14"><circle cx="8.3" cy="5.2" r="4" fill="none" stroke="#8a8a8a" stroke-width="1.2"/><path d="M5.5 8L1 12.5" stroke="#8a8a8a" stroke-width="1.3"/></svg>
<span class="t" style="left:642.00px;top:159.00px;font-size:12px;color:#8d8d8d;transform:scaleX(0.9458);transform-origin:left center;">Search wvBq8OAKMcVEJ7AlpPAusG7jV3P8d0CorO1gNikvxv2APcwDScaFfNxw8xwTS6fe</span>
<div class="b" style="left:140px;top:189px;width:18px;height:445px;background:#171717;"></div>
<div class="b" style="left:158px;top:189px;width:2px;height:445px;background:#292929;"></div>
<div class="b" style="left:141px;top:249px;width:15px;height:331px;background:#4d4d4d;"></div>
<svg class="b" style="left:143px;top:194px;" width="12" height="8" viewBox="0 0 12 8"><path d="M2.400 6.500L5.500 2.700 8.600 6.500" fill="none" stroke="#8c8c8c" stroke-width="2.200"/></svg>
<svg class="b" style="left:143px;top:622px;" width="12" height="8" viewBox="0 0 12 8"><path d="M2.400 1.500L5.500 5.300 8.600 1.500" fill="none" stroke="#6e6e6e" stroke-width="2.200"/></svg>
<div class="b" style="left:2px;top:462px;width:137px;height:22px;background:#333333;"></div>
<div class="b" style="left:0;top:189px;width:140px;height:445px;overflow:hidden">
<svg class="b" style="left:33px;top:4px;" width="16" height="16"><use href="#i-dl"/></svg>
<span class="t" style="left:54.00px;top:4.00px;font-size:12px;color:#fff;transform:scaleX(0.9853);transform-origin:left center;">Downloads</span>
<svg class="b" style="left:127px;top:6.5px;" width="10.5" height="11"><use href="#i-pinned"/></svg>
<svg class="b" style="left:33px;top:28px;" width="16" height="16"><use href="#i-doc"/></svg>
<span class="t" style="left:54.00px;top:28.00px;font-size:12px;color:#fff;">Documents</span>
<svg class="b" style="left:127px;top:30.5px;" width="10.5" height="11"><use href="#i-pinned"/></svg>
<svg class="b" style="left:33px;top:52px;" width="16" height="16"><use href="#i-pic"/></svg>
<span class="t" style="left:54.00px;top:52.00px;font-size:12px;color:#fff;transform:scaleX(0.9571);transform-origin:left center;">Pictures</span>
<svg class="b" style="left:127px;top:54.5px;" width="10.5" height="11"><use href="#i-pinned"/></svg>
<svg class="b" style="left:35px;top:76px;" width="13" height="16"><use href="#i-folder-s"/></svg>
<span class="t" style="left:54.00px;top:76.00px;font-size:12px;color:#fff;transform:scaleX(0.9162);transform-origin:left center;">Kexts</span>
<svg class="b" style="left:33px;top:100px;" width="16" height="16"><use href="#i-music"/></svg>
<span class="t" style="left:54.00px;top:100.00px;font-size:12px;color:#fff;transform:scaleX(1.0050);transform-origin:left center;">Music</span>
<svg class="b" style="left:33px;top:124px;" width="16" height="16"><use href="#i-video"/></svg>
<span class="t" style="left:54.00px;top:124.00px;font-size:12px;color:#fff;transform:scaleX(0.9593);transform-origin:left center;">Videos</span>
<svg class="b" style="left:35px;top:148px;" width="13" height="16"><use href="#i-folder-s"/></svg>
<span class="t" style="left:54.00px;top:148.00px;font-size:12px;color:#fff;">Within Vietname</span>
<svg class="b" style="left:25px;top:180px;" width="16" height="16"><use href="#i-pc"/></svg>
<span class="t" style="left:46.00px;top:180.00px;font-size:12px;color:#fff;transform:scaleX(0.9019);transform-origin:left center;">This PC</span>
<svg class="b" style="left:33px;top:204px;" width="16" height="16"><use href="#i-3d"/></svg>
<span class="t" style="left:54.00px;top:204.00px;font-size:12px;color:#fff;transform:scaleX(0.9518);transform-origin:left center;">3D Objects</span>
<svg class="b" style="left:33px;top:228px;" width="16" height="16"><use href="#i-desktop"/></svg>
<span class="t" style="left:54.00px;top:228.00px;font-size:12px;color:#fff;transform:scaleX(0.9539);transform-origin:left center;">Desktop</span>
<svg class="b" style="left:33px;top:252px;" width="16" height="16"><use href="#i-doc"/></svg>
<span class="t" style="left:54.00px;top:252.00px;font-size:12px;color:#fff;">Documents</span>
<svg class="b" style="left:33px;top:276px;" width="16" height="16"><use href="#i-dl"/></svg>
<span class="t" style="left:54.00px;top:276.00px;font-size:12px;color:#fff;transform:scaleX(0.9853);transform-origin:left center;">Downloads</span>
<svg class="b" style="left:33px;top:300px;" width="16" height="16"><use href="#i-music"/></svg>
<span class="t" style="left:54.00px;top:300.00px;font-size:12px;color:#fff;transform:scaleX(1.0050);transform-origin:left center;">Music</span>
<svg class="b" style="left:33px;top:324px;" width="16" height="16"><use href="#i-pic"/></svg>
<span class="t" style="left:54.00px;top:324.00px;font-size:12px;color:#fff;transform:scaleX(0.9571);transform-origin:left center;">Pictures</span>
<svg class="b" style="left:33px;top:348px;" width="16" height="16"><use href="#i-video"/></svg>
<span class="t" style="left:54.00px;top:348.00px;font-size:12px;color:#fff;transform:scaleX(0.9593);transform-origin:left center;">Videos</span>
<svg class="b" style="left:33px;top:372px;" width="16" height="16"><use href="#i-drivec"/></svg>
<span class="t" style="left:54.00px;top:372.00px;font-size:12px;color:#fff;transform:scaleX(0.9554);transform-origin:left center;">Firefly (C:)</span>
<svg class="b" style="left:33px;top:396px;" width="16" height="16"><use href="#i-drive"/></svg>
<span class="t" style="left:54.00px;top:396.00px;font-size:12px;color:#fff;transform:scaleX(0.8896);transform-origin:left center;">USB Drive (E:)</span>
<svg class="b" style="left:25px;top:428px;" width="16" height="16"><use href="#i-drive"/></svg>
<span class="t" style="left:46.00px;top:428.00px;font-size:12px;color:#fff;transform:scaleX(0.8896);transform-origin:left center;">USB Drive (E:)</span>
</div>
<svg class="b" style="left:297px;top:189px;" width="10" height="6" viewBox="0 0 10 6"><path d="M1 5l4-4 4 4" fill="none" stroke="#a8a8a8" stroke-width="1.300"/></svg>
<div class="b" style="left:432px;top:189px;width:1px;height:25px;background:#636363;"></div>
<div class="b" style="left:576px;top:189px;width:1px;height:25px;background:#636363;"></div>
<div class="b" style="left:696px;top:189px;width:1px;height:25px;background:#636363;"></div>
<div class="b" style="left:776px;top:189px;width:1px;height:25px;background:#636363;"></div>
<span class="t" style="left:178.00px;top:194.00px;font-size:12px;color:#fff;">Name</span>
<span class="t" style="left:439.00px;top:194.00px;font-size:12px;color:#fff;transform:scaleX(1.0129);transform-origin:left center;">Date modified</span>
<span class="t" style="left:583.00px;top:194.00px;font-size:12px;color:#fff;transform:scaleX(0.9417);transform-origin:left center;">Type</span>
<span class="t" style="left:703.00px;top:194.00px;font-size:12px;color:#fff;transform:scaleX(0.8782);transform-origin:left center;">Size</span>
<div class="b" style="left:159px;top:189px;width:952px;height:445px;overflow:hidden">
<div class="b" style="left:17px;top:221px;width:596px;height:20px;background:#777777;"></div>
<svg class="b" style="left:22px;top:33.0px;" width="13" height="16"><use href="#i-folder-s"/></svg>
<span class="t" style="left:40.00px;top:33.50px;font-size:12px;color:#fff;transform:scaleX(0.9636);transform-origin:left center;">locales</span>
<span class="t" style="left:280.00px;top:33.50px;font-size:12px;color:#fff;transform:scaleX(0.9553);transform-origin:left center;">9/4/2025 9:05 PM</span>
<span class="t" style="left:424.00px;top:33.50px;font-size:12px;color:#fff;transform:scaleX(0.9813);transform-origin:left center;">File folder</span>
<svg class="b" style="left:22px;top:54.0px;" width="13" height="16"><use href="#i-folder-s"/></svg>
<span class="t" style="left:40.00px;top:54.50px;font-size:12px;color:#fff;transform:scaleX(0.9770);transform-origin:left center;">Setting</span>
<span class="t" style="left:280.00px;top:54.50px;font-size:12px;color:#fff;transform:scaleX(0.9515);transform-origin:left center;">28/2/2025 5:24 PM</span>
<span class="t" style="left:424.00px;top:54.50px;font-size:12px;color:#fff;transform:scaleX(0.9813);transform-origin:left center;">File folder</span>
<svg class="b" style="left:22px;top:75.0px;" width="13" height="16"><use href="#i-folder-s"/></svg>
<span class="t" style="left:40.00px;top:75.50px;font-size:12px;color:#fff;transform:scaleX(0.9884);transform-origin:left center;">swiftshader</span>
<span class="t" style="left:280.00px;top:75.50px;font-size:12px;color:#fff;transform:scaleX(0.9515);transform-origin:left center;">28/2/2025 5:24 PM</span>
<span class="t" style="left:424.00px;top:75.50px;font-size:12px;color:#fff;transform:scaleX(0.9813);transform-origin:left center;">File folder</span>
<svg class="b" style="left:22px;top:96.0px;" width="13" height="16"><use href="#i-folder-s"/></svg>
<span class="t" style="left:40.00px;top:96.50px;font-size:12px;color:#fff;transform:scaleX(1.0192);transform-origin:left center;">www</span>
<span class="t" style="left:280.00px;top:96.50px;font-size:12px;color:#fff;transform:scaleX(0.9599);transform-origin:left center;">1/3/2025 11:03 PM</span>
<span class="t" style="left:424.00px;top:96.50px;font-size:12px;color:#fff;transform:scaleX(0.9813);transform-origin:left center;">File folder</span>
<svg class="b" style="left:22px;top:117.0px;" width="12" height="16"><use href="#i-ffhtml"/></svg>
<span class="t" style="left:40.00px;top:117.50px;font-size:12px;color:#fff;transform:scaleX(1.0186);transform-origin:left center;">credits.html</span>
<span class="t" style="left:280.00px;top:117.50px;font-size:12px;color:#fff;transform:scaleX(0.9553);transform-origin:left center;">3/4/2025 6:29 PM</span>
<span class="t" style="left:424.00px;top:117.50px;font-size:12px;color:#fff;transform:scaleX(0.9700);transform-origin:left center;">Firefox HTML Doc...</span>
<span class="t" style="left:583.48px;top:117.50px;font-size:12px;color:#fff;transform:scaleX(0.8187);transform-origin:right center;">1 KB</span>
<svg class="b" style="left:22px;top:138.0px;" width="12" height="16"><use href="#i-dll"/></svg>
<span class="t" style="left:40.00px;top:138.50px;font-size:12px;color:#fff;transform:scaleX(0.9927);transform-origin:left center;">d3dcompiler_47.dll</span>
<span class="t" style="left:280.00px;top:138.50px;font-size:12px;color:#fff;transform:scaleX(0.9553);transform-origin:left center;">3/4/2025 6:29 PM</span>
<span class="t" style="left:424.00px;top:138.50px;font-size:12px;color:#fff;">Application exten...</span>
<span class="t" style="left:560.12px;top:138.50px;font-size:12px;color:#fff;transform:scaleX(0.8729);transform-origin:right center;">4,802 KB</span>
<svg class="b" style="left:22px;top:159.0px;" width="12" height="16"><use href="#i-txt"/></svg>
<span class="t" style="left:40.00px;top:159.50px;font-size:12px;color:#fff;transform:scaleX(1.0243);transform-origin:left center;">debug.log</span>
<span class="t" style="left:280.00px;top:159.50px;font-size:12px;color:#fff;transform:scaleX(0.9580);transform-origin:left center;">27/1/2025 11:32 PM</span>
<span class="t" style="left:424.00px;top:159.50px;font-size:12px;color:#fff;transform:scaleX(0.9957);transform-origin:left center;">Text Document</span>
<span class="t" style="left:583.48px;top:159.50px;font-size:12px;color:#fff;transform:scaleX(0.8187);transform-origin:right center;">1 KB</span>
<svg class="b" style="left:22px;top:180.0px;" width="12" height="16"><use href="#i-dll"/></svg>
<span class="t" style="left:40.00px;top:180.50px;font-size:12px;color:#fff;transform:scaleX(1.0519);transform-origin:left center;">ffmpeg.dll</span>
<span class="t" style="left:280.00px;top:180.50px;font-size:12px;color:#fff;transform:scaleX(0.9553);transform-origin:left center;">3/4/2025 6:29 PM</span>
<span class="t" style="left:424.00px;top:180.50px;font-size:12px;color:#fff;">Application exten...</span>
<span class="t" style="left:560.12px;top:180.50px;font-size:12px;color:#fff;transform:scaleX(0.8729);transform-origin:right center;">1,787 KB</span>
<svg class="b" style="left:22px;top:201.0px;" width="12" height="16"><use href="#i-dll"/></svg>
<span class="t" style="left:40.00px;top:201.50px;font-size:12px;color:#fff;transform:scaleX(1.0474);transform-origin:left center;">ffmpegsumo.dll</span>
<span class="t" style="left:280.00px;top:201.50px;font-size:12px;color:#fff;transform:scaleX(0.9519);transform-origin:left center;">26/10/2015 11:00 PM</span>
<span class="t" style="left:424.00px;top:201.50px;font-size:12px;color:#fff;">Application exten...</span>
<span class="t" style="left:570.12px;top:201.50px;font-size:12px;color:#fff;transform:scaleX(0.8406);transform-origin:right center;">939 KB</span>
<svg class="b" style="left:21px;top:222.5px;" width="15" height="15"><use href="#i-game"/></svg>
<span class="t" style="left:40.00px;top:222.50px;font-size:12px;color:#fff;transform:scaleX(0.9393);transform-origin:left center;">Game.exe</span>
<span class="t" style="left:280.00px;top:222.50px;font-size:12px;color:#fff;transform:scaleX(0.9553);transform-origin:left center;">3/4/2025 6:29 PM</span>
<span class="t" style="left:424.00px;top:222.50px;font-size:12px;color:#fff;transform:scaleX(1.0218);transform-origin:left center;">Application</span>
<span class="t" style="left:560.12px;top:222.50px;font-size:12px;color:#fff;transform:scaleX(0.8729);transform-origin:right center;">3,240 KB</span>
<svg class="b" style="left:22px;top:243.0px;" width="12" height="16"><use href="#i-file"/></svg>
<span class="t" style="left:40.00px;top:243.50px;font-size:12px;color:#fff;transform:scaleX(1.0368);transform-origin:left center;">icudtl.dat</span>
<span class="t" style="left:280.00px;top:243.50px;font-size:12px;color:#fff;transform:scaleX(0.9553);transform-origin:left center;">3/4/2025 6:29 PM</span>
<span class="t" style="left:424.00px;top:243.50px;font-size:12px;color:#fff;transform:scaleX(0.9108);transform-origin:left center;">DAT File</span>
<span class="t" style="left:553.45px;top:243.50px;font-size:12px;color:#fff;transform:scaleX(0.8743);transform-origin:right center;">10,222 KB</span>
<svg class="b" style="left:22px;top:264.0px;" width="12" height="16"><use href="#i-dll"/></svg>
<span class="t" style="left:40.00px;top:264.50px;font-size:12px;color:#fff;transform:scaleX(0.9502);transform-origin:left center;">libEGL.dll</span>
<span class="t" style="left:280.00px;top:264.50px;font-size:12px;color:#fff;transform:scaleX(0.9553);transform-origin:left center;">3/4/2025 6:29 PM</span>
<span class="t" style="left:424.00px;top:264.50px;font-size:12px;color:#fff;">Application exten...</span>
<span class="t" style="left:570.12px;top:264.50px;font-size:12px;color:#fff;transform:scaleX(0.8406);transform-origin:right center;">489 KB</span>
<svg class="b" style="left:22px;top:285.0px;" width="12" height="16"><use href="#i-dll"/></svg>
<span class="t" style="left:40.00px;top:285.50px;font-size:12px;color:#fff;transform:scaleX(0.9258);transform-origin:left center;">libGLESv2.dll</span>
<span class="t" style="left:280.00px;top:285.50px;font-size:12px;color:#fff;transform:scaleX(0.9553);transform-origin:left center;">3/4/2025 6:29 PM</span>
<span class="t" style="left:424.00px;top:285.50px;font-size:12px;color:#fff;">Application exten...</span>
<span class="t" style="left:560.12px;top:285.50px;font-size:12px;color:#fff;transform:scaleX(0.8729);transform-origin:right center;">8,342 KB</span>
<svg class="b" style="left:22px;top:306.0px;" width="12" height="16"><use href="#i-file"/></svg>
<span class="t" style="left:40.00px;top:306.50px;font-size:12px;color:#fff;transform:scaleX(0.9915);transform-origin:left center;">natives_blob.bin</span>
<span class="t" style="left:280.00px;top:306.50px;font-size:12px;color:#fff;transform:scaleX(0.9483);transform-origin:left center;">28/12/2024 3:39 PM</span>
<span class="t" style="left:424.00px;top:306.50px;font-size:12px;color:#fff;transform:scaleX(0.9370);transform-origin:left center;">BIN File</span>
<span class="t" style="left:570.12px;top:306.50px;font-size:12px;color:#fff;transform:scaleX(0.8406);transform-origin:right center;">201 KB</span>
<svg class="b" style="left:22px;top:327.0px;" width="12" height="16"><use href="#i-dll"/></svg>
<span class="t" style="left:40.00px;top:327.50px;font-size:12px;color:#fff;transform:scaleX(1.0227);transform-origin:left center;">node.dll</span>
<span class="t" style="left:280.00px;top:327.50px;font-size:12px;color:#fff;transform:scaleX(0.9553);transform-origin:left center;">3/4/2025 6:29 PM</span>
<span class="t" style="left:424.00px;top:327.50px;font-size:12px;color:#fff;">Application exten...</span>
<span class="t" style="left:553.45px;top:327.50px;font-size:12px;color:#fff;transform:scaleX(0.8743);transform-origin:right center;">23,072 KB</span>
<svg class="b" style="left:20px;top:350.5px;" width="16" height="12"><use href="#i-exe"/></svg>
<span class="t" style="left:40.00px;top:348.50px;font-size:12px;color:#fff;transform:scaleX(1.0048);transform-origin:left center;">notification_helper.exe</span>
<span class="t" style="left:280.00px;top:348.50px;font-size:12px;color:#fff;transform:scaleX(0.9553);transform-origin:left center;">3/4/2025 6:29 PM</span>
<span class="t" style="left:424.00px;top:348.50px;font-size:12px;color:#fff;transform:scaleX(1.0218);transform-origin:left center;">Application</span>
<span class="t" style="left:560.12px;top:348.50px;font-size:12px;color:#fff;transform:scaleX(0.8729);transform-origin:right center;">1,332 KB</span>
<svg class="b" style="left:22px;top:369.0px;" width="12" height="16"><use href="#i-dll"/></svg>
<span class="t" style="left:40.00px;top:369.50px;font-size:12px;color:#fff;transform:scaleX(1.0556);transform-origin:left center;">nw.dll</span>
<span class="t" style="left:280.00px;top:369.50px;font-size:12px;color:#fff;transform:scaleX(0.9553);transform-origin:left center;">3/4/2025 6:29 PM</span>
<span class="t" style="left:424.00px;top:369.50px;font-size:12px;color:#fff;">Application exten...</span>
<span class="t" style="left:546.78px;top:369.50px;font-size:12px;color:#fff;transform:scaleX(0.8753);transform-origin:right center;">246,312 KB</span>
<svg class="b" style="left:22px;top:390.0px;" width="12" height="16"><use href="#i-file"/></svg>
<span class="t" style="left:40.00px;top:390.50px;font-size:12px;color:#fff;transform:scaleX(1.0171);transform-origin:left center;">nw.pak</span>
<span class="t" style="left:280.00px;top:390.50px;font-size:12px;color:#fff;transform:scaleX(0.9519);transform-origin:left center;">26/10/2015 11:00 PM</span>
<span class="t" style="left:424.00px;top:390.50px;font-size:12px;color:#fff;transform:scaleX(0.9062);transform-origin:left center;">PAK File</span>
<span class="t" style="left:560.12px;top:390.50px;font-size:12px;color:#fff;transform:scaleX(0.8729);transform-origin:right center;">7,308 KB</span>
<svg class="b" style="left:22px;top:411.0px;" width="12" height="16"><use href="#i-file"/></svg>
<span class="t" style="left:40.00px;top:411.50px;font-size:12px;color:#fff;transform:scaleX(0.9513);transform-origin:left center;">nw_100_percent.pak</span>
<span class="t" style="left:280.00px;top:411.50px;font-size:12px;color:#fff;transform:scaleX(0.9553);transform-origin:left center;">3/4/2025 6:29 PM</span>
<span class="t" style="left:424.00px;top:411.50px;font-size:12px;color:#fff;transform:scaleX(0.9062);transform-origin:left center;">PAK File</span>
<span class="t" style="left:570.12px;top:411.50px;font-size:12px;color:#fff;transform:scaleX(0.8406);transform-origin:right center;">677 KB</span>
<svg class="b" style="left:22px;top:432.0px;" width="12" height="16"><use href="#i-file"/></svg>
<span class="t" style="left:40.00px;top:432.50px;font-size:12px;color:#fff;transform:scaleX(0.9513);transform-origin:left center;">nw_200_percent.pak</span>
<span class="t" style="left:280.00px;top:432.50px;font-size:12px;color:#fff;transform:scaleX(0.9553);transform-origin:left center;">3/4/2025 6:29 PM</span>
<span class="t" style="left:424.00px;top:432.50px;font-size:12px;color:#fff;transform:scaleX(0.9062);transform-origin:left center;">PAK File</span>
<span class="t" style="left:560.12px;top:432.50px;font-size:12px;color:#fff;transform:scaleX(0.8729);transform-origin:right center;">1,088 KB</span>
</div>
<div class="b" style="left:1111px;top:206px;width:15px;height:278px;background:#4d4d4d;"></div>
<svg class="b" style="left:1113px;top:194px;" width="12" height="8" viewBox="0 0 12 8"><path d="M2.400 6.500L5.500 2.700 8.600 6.500" fill="none" stroke="#8c8c8c" stroke-width="2.200"/></svg>
<svg class="b" style="left:1113px;top:621px;" width="12" height="8" viewBox="0 0 12 8"><path d="M2.400 1.800L5.500 5.600 8.600 1.800" fill="none" stroke="#8c8c8c" stroke-width="2.200"/></svg>
<span class="t" style="left:15.00px;top:638.00px;font-size:12px;color:#fff;transform:scaleX(0.9700);transform-origin:left center;">29 items</span>
<div class="b" style="left:69px;top:641px;width:1px;height:11px;background:#e0e0e0;"></div>
<span class="t" style="left:81.00px;top:638.00px;font-size:12px;color:#fff;transform:scaleX(0.9601);transform-origin:left center;">1 item selected</span>
<span class="t" style="left:165.00px;top:638.00px;font-size:12px;color:#fff;transform:scaleX(0.9283);transform-origin:left center;">3.16 MB</span>
<div class="b" style="left:217px;top:641px;width:1px;height:11px;background:#e0e0e0;"></div>
<div class="b" style="left:1079px;top:634px;width:22px;height:23px;background:#666666;border:1px solid #9a9a9a"></div>
<svg class="b" style="left:1083px;top:638px;" width="16" height="16"><use href="#i-viewdetails"/></svg>
<svg class="b" style="left:1105px;top:638px;" width="15" height="14"><use href="#i-viewlarge"/></svg>
</div></body></html>
